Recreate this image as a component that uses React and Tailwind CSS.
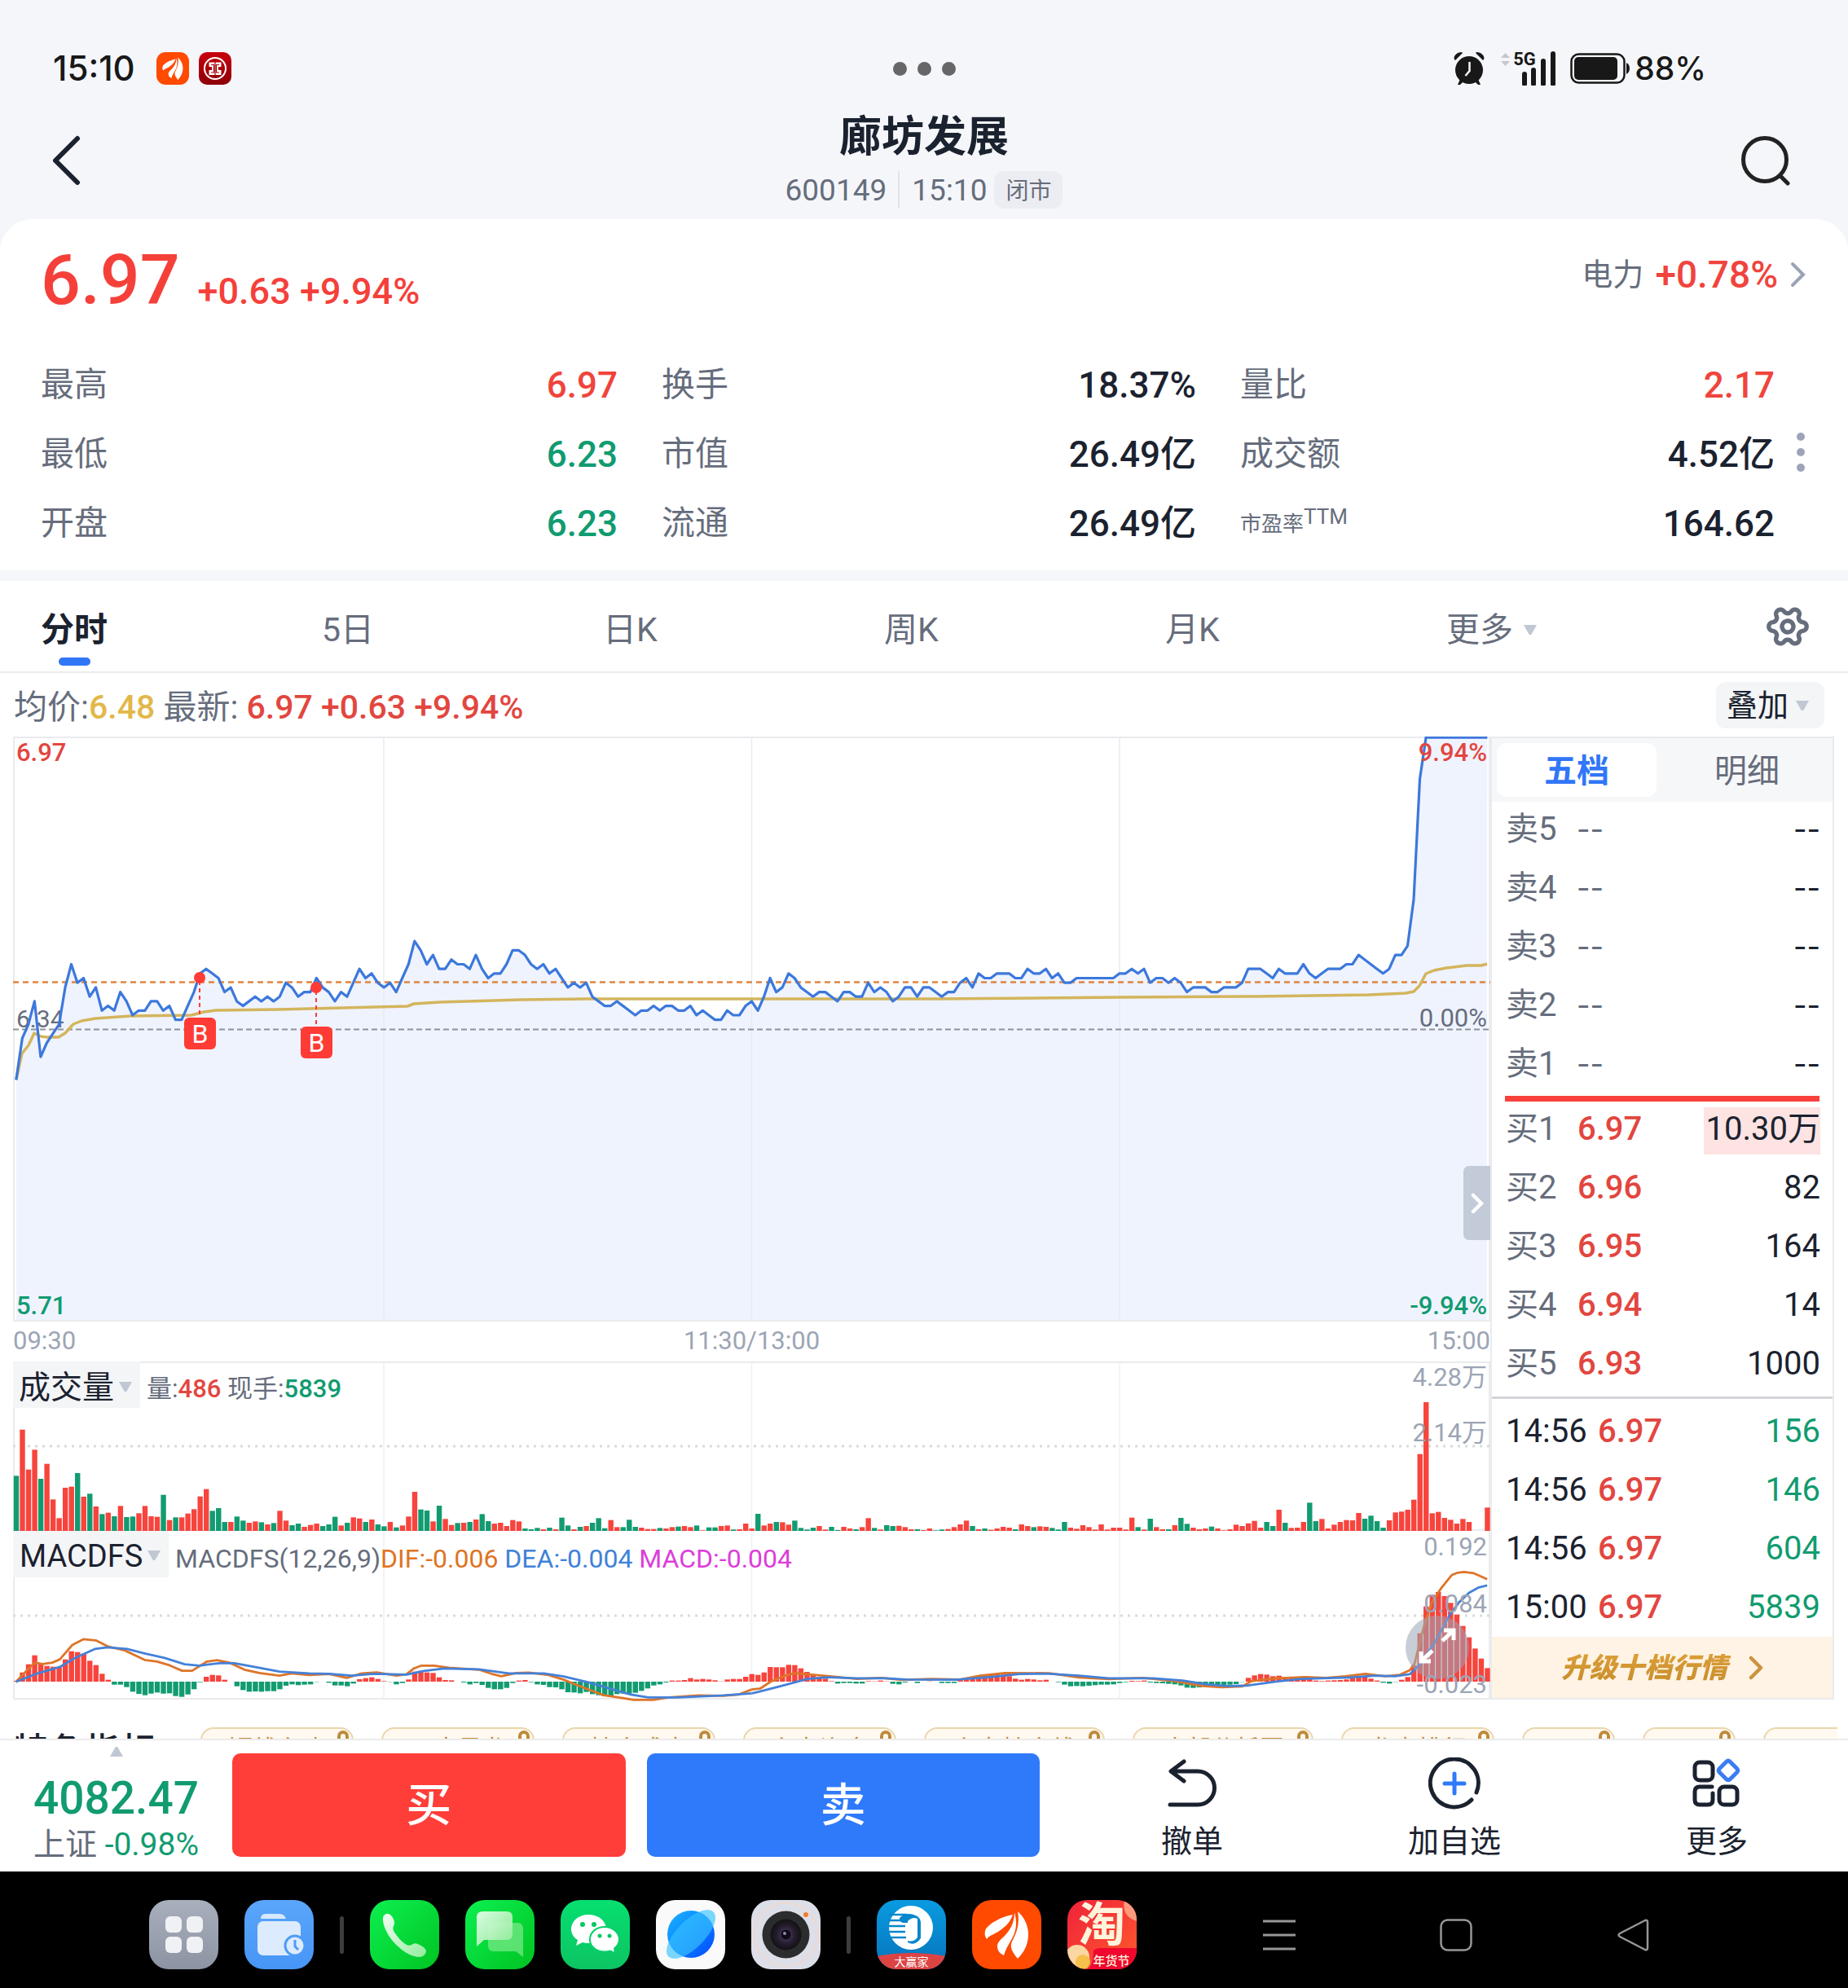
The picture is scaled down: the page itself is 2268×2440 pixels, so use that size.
import React from "react";
import { Settings } from "lucide-react";

/* ---------- data ---------- */

// Minute prices, in cents above the previous close (6.34).
const PRICE = [
  -11, -2, 1, 6, -6, -3, -1, 1, 9, 14, 10, 11, 7, 9, 4, 5, 4, 8, 6, 3, 4, 4, 6, 6, 4, 5, 2, 2, 5, 8,
  12, 13, 12, 11, 8, 9, 6, 5, 6, 7, 6, 7, 6, 7, 10, 9, 7, 8, 8, 11, 9, 8, 6, 8, 7, 10, 13, 11, 12, 10,
  9, 10, 8, 11, 14, 19, 17, 14, 16, 13, 13, 15, 14, 14, 13, 16, 13, 11, 12, 12, 14, 17, 17, 16, 14, 13, 14, 12, 13, 11,
  9, 10, 9, 10, 7, 6, 5, 5, 6, 5, 4, 3, 4, 4, 5, 4, 5, 5, 4, 4, 5, 3, 4, 3, 2, 2, 4, 3, 3, 5,
  6, 4, 7, 11, 8, 9, 12, 11, 9, 8, 7, 8, 8, 7, 6, 8, 8, 7, 7, 10, 8, 9, 8, 6, 7, 9, 9, 7, 9, 9,
  8, 7, 8, 8, 10, 11, 9, 12, 11, 11, 12, 12, 12, 11, 11, 13, 12, 12, 13, 11, 12, 10, 10, 11, 11, 11, 11, 11, 11, 11,
  12, 12, 13, 12, 13, 10, 11, 11, 10, 11, 10, 8, 9, 9, 9, 8, 8, 9, 9, 9, 10, 13, 13, 13, 12, 11, 13, 12, 12, 12,
  14, 12, 11, 12, 13, 13, 13, 14, 14, 16, 15, 14, 13, 12, 13, 16, 16, 18, 28, 54, 63, 63, 63, 63, 63, 63, 63, 63, 63, 63,
  63,
];

// Minute volumes; a negative value is a falling minute.
const VOLUME = [
  -203, 373, 226, 299, -192, 247, 116, 47, 159, 163, -213, 126, -137, 90, -62, 67, -54, 92, -51, -53, 65, 92, 54, 52, -133, 40, -50, 50, 64, 80,
  127, 154, -74, -84, -33, 33, -53, -38, 30, 35, -32, 24, -29, 74, 38, -21, -27, 15, 22, 27, -18, -24, -52, 20, -30, 50, 46, -33, 42, -24,
  -17, 33, -13, 20, 53, 144, -79, -75, 35, -93, 44, 22, -29, 30, -33, 42, -62, -36, 27, 30, 18, 40, 35, -9, -6, -11, 6, -12, 6, -49,
  -20, 6, -15, 18, -30, -47, -10, 40, 14, -14, -41, -15, 12, 7, 7, -11, 9, 14, -16, 18, 14, -20, 2, -13, -13, 18, 20, -5, 6, 27,
  9, -63, 20, 27, -33, 32, 23, -38, -11, -5, -12, 18, 5, -15, -3, 15, 9, -6, 14, 47, -11, 5, -21, -18, 19, 14, 6, -6, 3, 9,
  -2, -5, 7, 14, 24, 38, -18, 6, -9, 4, 9, 15, 12, -6, 24, 18, -14, 17, 15, -11, -5, -33, 12, 8, 21, 14, 5, 24, 5, 12,
  12, 5, 49, -14, 5, -45, 14, 6, -6, 21, -48, -26, 12, 6, 9, -16, 9, 2, 6, 23, 18, 28, 37, 12, -33, -18, 78, -30, 11, 12,
  33, -104, -36, 44, 9, 23, 33, 40, 39, 66, -45, -56, -36, -12, 39, 68, 71, 78, 115, 283, 474, 65, 70, 48, 41, 27, 44, 33, 0, 0,
  86,
];

const MACD = [
  3, 34, 64, 97, 64, 58, 55, 53, 82, 112, 109, 103, 77, 61, 29, 7, -11, -11, -20, -37, -45, -50, -44, -40, -44, -43, -53, -56, -47, -28,
  -2, 18, 25, 23, 7, 0, -17, -31, -37, -36, -37, -35, -35, -28, -15, -10, -13, -11, -10, -1, 0, -4, -14, -14, -17, -7, 9, 13, 16, 10,
  2, -1, -10, -5, 8, 37, 40, 34, 32, 16, 6, 5, 0, -3, -10, -5, -12, -23, -28, -28, -23, -5, 4, 6, -2, -10, -12, -20, -21, -28,
  -39, -40, -43, -38, -46, -50, -54, -51, -46, -44, -44, -41, -34, -25, -14, -10, -3, 4, 4, 6, 13, 8, 10, 8, 5, 1, 8, 10, 10, 18,
  28, 25, 34, 54, 53, 53, 62, 61, 49, 36, 24, 18, 11, 2, -7, -5, -5, -7, -7, 2, 1, 4, 1, -8, -10, -3, 0, -5, 0, 1,
  0, -5, -5, -5, 8, 13, 14, 20, 24, 25, 30, 26, 20, 11, 7, 10, 8, 5, 7, 0, -2, -11, -17, -16, -17, -15, -13, -11, -11, -10,
  -5, -2, 3, 2, 4, -3, -5, -6, -8, -10, -14, -22, -23, -21, -18, -16, -15, -12, -11, -9, -1, 14, 23, 28, 26, 20, 22, 16, 15, 16,
  20, 14, 4, 2, 4, 5, 6, 8, 12, 18, 20, 11, 4, -4, -7, -1, 7, 17, 60, 178, 277, 320, 330, 315, 290, 247, 205, 163, 122, 85,
  50,
];

const DIF_AM =
  "32,1333 57,1285 70,1262 85,1267 105,1262 120,1250 145,1197 167,1176 192,1180 217,1203 250,1217 290,1252 315,1258 340,1272 365,1292 385,1292 415,1258 435,1253 460,1262 490,1288 520,1300 560,1310 585,1302 620,1308 660,1304 695,1318 725,1302 755,1298 795,1310 815,1305 830,1283 845,1273 870,1273 900,1281 960,1288 985,1303 1005,1312 1035,1300 1060,1299 1100,1308 1130,1325 1160,1347 1210,1382 1240,1390 1270,1399 1310,1399 1340,1390 1400,1383 1450,1384 1480,1380 1507,1361";
const DIF_PM =
  "37,1361 55,1357 75,1333 105,1310 125,1301 150,1305 200,1313 250,1322 300,1318 340,1326 400,1322 460,1324 500,1310 550,1300 640,1301 700,1317 760,1323 830,1318 900,1332 950,1348 990,1353 1030,1350 1050,1330 1100,1320 1160,1315 1200,1318 1240,1312 1280,1303 1320,1312 1350,1307 1370,1290 1380,1265 1390,1190 1400,1120 1415,1040 1435,985 1455,940 1467,931 1480,928 1500,933 1527,955";
const DEA_AM =
  "32,1333 70,1305 120,1278 150,1245 190,1212 215,1206 255,1212 290,1228 330,1245 370,1268 400,1273 440,1264 470,1264 510,1278 560,1295 620,1302 660,1303 705,1310 750,1303 815,1306 850,1293 890,1284 960,1287 1020,1302 1090,1302 1130,1313 1180,1335 1230,1362 1265,1380 1300,1390 1360,1390 1450,1383 1507,1375";
const DEA_PM =
  "37,1375 50,1370 100,1347 150,1322 190,1316 250,1320 310,1320 350,1324 450,1325 520,1315 580,1304 640,1303 700,1310 760,1320 850,1320 910,1328 960,1342 1000,1348 1040,1347 1100,1332 1150,1322 1250,1317 1300,1310 1340,1312 1370,1305 1390,1270 1420,1190 1450,1090 1470,1040 1490,1005 1510,985 1527,978";

const AVERAGE =
  "4,421 11,389 19,379 26,364 34,368 41,369 56,369 64,364 74,353 84,349 101,346 144,343 219,342 234,338 249,336 324,335 404,333 484,331 492,328 524,326 624,323 704,322 906,322 1134,322 1359,320 1524,319 1664,317 1709,315 1719,313 1726,306 1734,291 1744,287 1759,284 1784,281 1802,281 1809,279";

const STEP = 1813 / 241;
const priceLine = PRICE.map((k, i) => `${(3.8 + i * STEP).toFixed(1)},${(359 - k * 5.68).toFixed(1)}`).join(" ");

const STATS = [
  ["最高", "6.97", "text-[#f0443c]"],
  ["换手", "18.37%", "text-[#1b222f]"],
  ["量比", "2.17", "text-[#f0443c]"],
  ["最低", "6.23", "text-[#119b70]"],
  ["市值", "26.49亿", "text-[#1b222f]"],
  ["成交额", "4.52亿", "text-[#1b222f]"],
  ["开盘", "6.23", "text-[#119b70]"],
  ["流通", "26.49亿", "text-[#1b222f]"],
  ["市盈率", "164.62", "text-[#1b222f]"],
];

const SELLS = ["卖5", "卖4", "卖3", "卖2", "卖1"];
const BUYS = [
  ["买1", "6.97", "10.30万"],
  ["买2", "6.96", "82"],
  ["买3", "6.95", "164"],
  ["买4", "6.94", "14"],
  ["买5", "6.93", "1000"],
];
const TRADES = [
  ["14:56", "6.97", "156"],
  ["14:56", "6.97", "146"],
  ["14:56", "6.97", "604"],
  ["15:00", "6.97", "5839"],
];
const CHIPS = [
  ["短线主攻", "w-[188px]"],
  ["五步寻龙", "w-[188px]"],
  ["持仓成本", "w-[188px]"],
  ["主力资金", "w-[188px]"],
  ["主力持仓线", "w-[222px]"],
  ["底部分析图", "w-[222px]"],
  ["龙虎排行", "w-[188px]"],
  ["一一", "w-[114px]"],
  ["一一", "w-[114px]"],
  ["一一", "w-[188px]"],
];

/* ---------- small pieces ---------- */

function Caret({ up, className = "" }) {
  return (
    <svg viewBox="0 0 18 13" className={`h-[13px] w-[18px] shrink-0 ${className}`} aria-hidden="true">
      <path d={up ? "M1 13h16L10.500 1.500Q9 0 7.500 1.500Z" : "M1 0h16L10.500 11.500Q9 13 7.500 11.500Z"} fill="#c1c7d3" />
    </svg>
  );
}

function EastIcon({ className }) {
  return (
    <svg viewBox="0 0 85 85" className={className} aria-hidden="true">
      <rect width="85" height="85" rx="24" fill="#ff4a00" />
      <g fill="#fff">
        <path d="M50 18C36 20 17 31 16 38c-1 4 0 7 2 10 3-5 11-6 18-12 7-5 11-10 14-18z" />
        <path d="M52 15c0 14-6 23-13 30-6 5-8 8-8 12 0 6 4 9 8 11 2-7 5-12 9-19 6-10 8-20 4-34z" />
        <path d="M56 14c3 16-2 27-6 35-4 7-3 12 6 23 9-9 13-19 13-30 0-12-6-22-13-28z" />
      </g>
    </svg>
  );
}

function IcbcIcon({ className }) {
  return (
    <svg viewBox="0 0 40 40" className={className} aria-hidden="true">
      <defs>
        <linearGradient id="icbc" x1="0" y1="0" x2="0" y2="1">
          <stop offset="0" stopColor="#c9000c" />
          <stop offset="1" stopColor="#8c0008" />
        </linearGradient>
      </defs>
      <rect width="40" height="40" rx="10" fill="url(#icbc)" />
      <circle cx="20" cy="20" r="13" fill="none" stroke="#fff" strokeWidth="2" />
      <path d="M12.500 12.500h15v5.500h-3.500v4h3.500v6h-15v-6h3.500v-4h-3.500z" fill="#fff" />
      <path d="M20 12v17M15 15.500h3.500v9.500H15M25 15.500h-3.500v9.500H25" fill="none" stroke="#a8000a" strokeWidth="1.200" />
    </svg>
  );
}

function StatusBar() {
  return (
    <div className="grid h-[114px] grid-cols-3 items-center pt-[53px] font-['Inter'] text-[#181818]">
      <div className="flex items-center pl-[65px]">
        <span className="text-[42px] leading-[62px] font-medium">15:10</span>
        <EastIcon className="ml-[26px] size-10" />
        <IcbcIcon className="ml-3 size-10" />
      </div>
      <div className="flex justify-center gap-[13px]">
        <i className="size-[17px] rounded-full bg-[#666668]" />
        <i className="size-[17px] rounded-full bg-[#666668]" />
        <i className="size-[17px] rounded-full bg-[#666668]" />
      </div>
      <div className="flex items-center justify-end pr-[174px]">
        <svg viewBox="0 0 40 42" className="h-[42px] w-10" aria-hidden="true">
          <g fill="#181818">
            <circle cx="20" cy="23" r="17" />
            <path d="M2 10C0 6 5 1 11 1l1 1L3 11zM38 10c2-4-3-9-9-9l-1 1 9 9zM9 34l-3 7h3l5-5zM31 34l3 7h-3l-5-5z" />
          </g>
          <path d="M20.500 13v11l-5 6" fill="none" stroke="#f5f6fa" strokeWidth="2.500" />
        </svg>
        <div className="relative ml-[17px] h-[42px] w-[70px]">
          <svg viewBox="0 0 70 42" className="h-[42px] w-[70px]" aria-hidden="true">
            <path d="M2 8l5.500-6L13 8zM2 12l5.500 6L13 12z" fill="#c6c7cb" />
            <path d="M31 28v12M42 23v17M54 12v28M66 3v37" stroke="#181818" strokeWidth="6" strokeLinecap="round" />
          </svg>
          <span className="absolute top-0 left-[17px] font-['Roboto'] text-[22px] leading-5 font-bold">5G</span>
        </div>
        <svg viewBox="0 0 73 38" className="ml-[17px] h-[38px] w-[73px]" aria-hidden="true">
          <rect x="1.500" y="1.500" width="65" height="35" rx="9" fill="none" stroke="#181818" strokeWidth="2.500" />
          <rect x="5" y="5" width="53" height="28" rx="5" fill="#181818" />
          <path d="M69 12q4 2 4 7t-4 7z" fill="#181818" />
        </svg>
        <span className="ml-[6px] text-[39px] leading-[62px] font-medium">88%</span>
      </div>
    </div>
  );
}

function Header() {
  return (
    <header className="grid h-[155px] grid-cols-[1fr_auto_1fr] items-start pt-[25px]">
      <button aria-label="返回" className="mt-[27px] ml-[62px] justify-self-start">
        <svg viewBox="0 0 40 62" className="h-[62px] w-10" fill="none" stroke="#1b222f" strokeWidth="6" strokeLinecap="round" strokeLinejoin="round">
          <path d="M33 4L6 31l27 27" />
        </svg>
      </button>
      <div className="flex flex-col items-center">
        <h1 className="text-[52px] leading-[60px] font-bold text-[#1b222f]">廊坊发展</h1>
        <div className="mt-[11px] flex h-[46px] items-center text-[37px] leading-[49px] text-[#666d7c]">
          <span>600149</span>
          <span className="mr-[15px] ml-[14px] h-full w-[2px] bg-[#e1e3e9]" />
          <span>15:10</span>
          <span className="ml-[9px] h-full rounded-[12px] bg-[#ecedf2] px-[14px] text-[28px]">闭市</span>
        </div>
      </div>
      <button aria-label="搜索" className="mt-[27px] mr-[70px] justify-self-end">
        <svg viewBox="0 0 62 62" className="size-[62px]" fill="none" stroke="#222" strokeWidth="5" strokeLinecap="round">
          <circle cx="30" cy="30" r="26.500" />
          <path d="M50 51l8 8" />
        </svg>
      </button>
    </header>
  );
}

function Quote() {
  return (
    <section className="rounded-t-[40px] bg-white pb-[15px]">
      <div className="flex h-[161px] items-start justify-between pt-[32px] pr-[50px] pl-[50px]">
        <div className="flex items-baseline text-[#f5403a]">
          <span className="text-[86px] leading-[86px] font-medium">6.97</span>
          <span className="ml-[22px] text-[45px] font-medium">+0.63 +9.94%</span>
        </div>
        <a href="#power" className="flex h-[72px] items-center">
          <span className="text-[38px] text-[#666d7c]">电力</span>
          <span className="ml-[14px] text-[46px] font-medium text-[#f0443c]">+0.78%</span>
          <svg viewBox="0 0 22 32" className="ml-[14px] h-8 w-[22px]" fill="none" stroke="#9aa3b5" strokeWidth="4" strokeLinecap="round">
            <path d="M4 3l13 13L4 29" />
          </svg>
        </a>
      </div>
      <div className="flex items-center pr-[50px] pl-[50px]">
        <dl className="grid flex-1 grid-cols-[708fr_656fr_656fr] gap-x-[54px]">
          {STATS.map(([label, value, color]) => (
            <div key={label} className="flex h-[85px] items-center justify-between">
              {label === "市盈率" ? (
                <dt className="flex text-[26px] leading-[30px] text-[#666d7c]">
                  <span>市盈率</span>
                  <span className="-mt-[9px]">TTM</span>
                </dt>
              ) : (
                <dt className="text-[41px] text-[#666d7c]">{label}</dt>
              )}
              <dd className={`text-[44px] font-medium ${color}`}>{value}</dd>
            </div>
          ))}
        </dl>
        <button aria-label="展开" className="-mt-[6px] ml-[27px] flex w-[13px] flex-col gap-[9px]">
          <i className="size-[10px] rounded-full bg-[#9ca5b8]" />
          <i className="size-[10px] rounded-full bg-[#9ca5b8]" />
          <i className="size-[10px] rounded-full bg-[#9ca5b8]" />
        </button>
      </div>
    </section>
  );
}

function Tabs() {
  return (
    <nav className="flex h-[113px] items-center border-b-2 border-[#ebebeb] pl-[50px] text-[41px] text-[#666d7c]">
      {["分时", "5日", "日K", "周K", "月K", "更多"].map((t, i) => (
        <div key={t} className="relative flex h-full flex-1 items-center pt-[10px]">
          <button className={i === 0 ? "font-bold text-[#1b222f]" : "flex items-center"}>
            {t}
            {i === 5 && <Caret className="ml-3" />}
          </button>
          {i === 0 && <span className="absolute bottom-[7px] left-[22px] h-[10px] w-[39px] rounded-full bg-[#3176f6]" />}
        </div>
      ))}
      <button aria-label="设置" className="flex w-[148px] justify-center">
        <Settings size={56} strokeWidth={2.3} color="#666d7c" className="rotate-30" />
      </button>
    </nav>
  );
}

function InfoRow() {
  return (
    <div className="flex h-[78px] items-center justify-between pr-[29px] pl-[17px] text-[41px]">
      <p className="pt-[8px] whitespace-pre text-[#666d7c]">
        均价:<span className="font-medium text-[#e2b84a]">6.48</span> 最新: <span className="font-medium text-[#e2463f]">6.97 +0.63 +9.94%</span>
      </p>
      <button className="flex h-[57px] items-center rounded-[12px] bg-[#f4f5f7] pt-[2px] pr-[18px] pl-[13px] text-[38px] text-[#1b222f]">
        叠加
        <Caret className="ml-[8px]" />
      </button>
    </div>
  );
}

function PriceChart() {
  return (
    <div className="relative h-[718px] text-[31px] leading-[36px]">
      <svg viewBox="0 0 1813 718" preserveAspectRatio="none" className="block h-full w-full" aria-label="分时走势">
        <polygon points={`3.800,717 ${priceLine} 1808.600,717`} fill="#eff3fe" />
        <path d="M455 0v718M906.500 0v718M1358 0v718" stroke="#e9ebf1" strokeWidth="1.500" />
        <rect x="1" y="1" width="1811" height="716" fill="none" stroke="#e9ebee" strokeWidth="2" />
        <path d="M0 359.500H1813" stroke="#8d919b" strokeWidth="2" strokeDasharray="7 4" />
        <path d="M0 301.500H1813" stroke="#e0853f" strokeWidth="2.500" strokeDasharray="7 5" />
        <text x="4" y="357" className="fill-[#666d7c] font-['Roboto'] text-[30px]">6.34</text>
        <polyline points={AVERAGE} fill="none" stroke="#d3b55c" strokeWidth="3.500" strokeLinejoin="round" />
        <polyline points={priceLine} fill="none" stroke="#3c78dc" strokeWidth="3.200" strokeLinejoin="round" />
        <path d="M229 300v48M372 312v48" stroke="#ff3b36" strokeWidth="2" strokeDasharray="5 4" />
        <circle cx="229" cy="296" r="7" fill="#ff3b36" />
        <circle cx="372" cy="308" r="7" fill="#ff3b36" />
        <rect x="210" y="345" width="39" height="39" rx="6" fill="#ff3b36" />
        <rect x="353" y="356" width="39" height="39" rx="6" fill="#ff3b36" />
        <g className="fill-white font-['Roboto'] text-[32px]" textAnchor="middle">
          <text x="229.500" y="376">B</text>
          <text x="372.500" y="387">B</text>
        </g>
      </svg>
      <span className="absolute top-[2px] left-[4px] font-medium text-[#e2463f]">6.97</span>
      <span className="absolute top-[2px] right-[4px] font-medium text-[#e2463f]">9.94%</span>
      <span className="absolute top-[328px] right-[4px] text-[#666d7c]">0.00%</span>
      <span className="absolute bottom-[1px] left-[4px] font-medium text-[#119b70]">5.71</span>
      <span className="absolute right-[4px] bottom-[1px] font-medium text-[#119b70]">-9.94%</span>
      <button aria-label="收起盘口" className="absolute top-[527px] right-0 flex h-[91px] w-[33px] items-center justify-center rounded-l-[7px] bg-[#c3cad8]">
        <svg viewBox="0 0 18 26" className="h-[26px] w-[18px]" fill="none" stroke="#fff" strokeWidth="4.500" strokeLinecap="round">
          <path d="M4 3l10 10L4 23" />
        </svg>
      </button>
    </div>
  );
}

function VolumeChart() {
  return (
    <div className="relative h-[208px] text-[31px] leading-[36px]">
      <svg viewBox="0 0 1813 208" preserveAspectRatio="none" className="block h-full w-full" aria-label="成交量">
        <path d="M455 0v208M906.500 0v208M1358 0v208" stroke="#f0f1f3" strokeWidth="1.500" />
        <path d="M0 1H1812V208M1 0V208M0 207H1813" fill="none" stroke="#e9ebee" strokeWidth="2" />
        <path d="M0 104H1813" stroke="#d9dbdf" strokeWidth="3" strokeDasharray="3 6" />
        {VOLUME.map((v, i) => (
          <rect key={i} x={0.8 + i * STEP} y={208 - Math.abs(v) / 3} width="6.400" height={Math.abs(v) / 3} fill={v < 0 ? "#129b71" : "#f7443d"} />
        ))}
      </svg>
      <div className="absolute top-0 left-0 flex items-center">
        <button className="flex h-[57px] w-[156px] items-center bg-[#f4f5f7] pt-[6px] pl-[7px] text-[39px] text-[#1b222f]">
          成交量
          <Caret className="ml-[5px]" />
        </button>
        <p className="pt-[10px] pl-[8px] text-[#666d7c]">
          量:<span className="font-medium text-[#e2463f]">486</span> 现手:<span className="font-medium text-[#119b70]">5839</span>
        </p>
      </div>
      <span className="absolute top-[2px] right-[4px] text-[#9ca5b5]">4.28万</span>
      <span className="absolute top-[70px] right-[4px] text-[#9ca5b5]">2.14万</span>
    </div>
  );
}

function MacdChart() {
  return (
    <div className="relative h-[207px] text-[31px] leading-[36px]">
      <svg viewBox="0 0 1813 207" preserveAspectRatio="none" className="block h-full w-full overflow-visible" aria-label="MACDFS">
        <path d="M455 0v207M906.500 0v207M1358 0v207" stroke="#f0f1f3" strokeWidth="1.500" />
        <path d="M1812 0V206H1V0" fill="none" stroke="#e9ebee" strokeWidth="2" />
        <path d="M0 104H1813" stroke="#d9dbdf" strokeWidth="3" strokeDasharray="3 6" />
        {MACD.map((v, i) => (
          <rect key={i} x={0.8 + i * STEP} y={v < 0 ? 185 : 185 - v / 3} width="6.400" height={Math.abs(v) / 3} fill={v < 0 ? "#129b71" : "#f7443d"} />
        ))}
        <g fill="none" strokeWidth="2.800" strokeLinejoin="round">
          <g transform="matrix(0.6122 0 0 0.3333 -16 -259)">
            <polyline points={DIF_AM} stroke="#dd7529" vectorEffect="non-scaling-stroke" />
            <polyline points={DEA_AM} stroke="#4481d8" vectorEffect="non-scaling-stroke" />
          </g>
          <g transform="matrix(0.6059 0 0 0.3333 884 -259)">
            <polyline points={DIF_PM} stroke="#dd7529" vectorEffect="non-scaling-stroke" />
            <polyline points={DEA_PM} stroke="#4481d8" vectorEffect="non-scaling-stroke" />
          </g>
        </g>
      </svg>
      <div className="absolute top-0 left-0 flex items-center">
        <button className="flex h-[57px] w-[191px] items-center bg-[#f4f5f7] pt-[4px] pl-[8px] text-[38px] text-[#1b222f]">
          MACDFS
          <Caret className="ml-[5px]" />
        </button>
        <p className="pt-[10px] pl-[8px] text-[32px] whitespace-pre text-[#666d7c]">
          MACDFS(12,26,9)<span className="text-[#e0731f]">DIF:-0.006</span> <span className="text-[#3f82d9]">DEA:-0.004</span>{" "}
          <span className="text-[#dc3ed9]">MACD:-0.004</span>
        </p>
      </div>
      <button aria-label="全屏" className="absolute top-[104px] right-[26px] size-[78px] rounded-full bg-[#9aa5b8]/55">
        <svg viewBox="0 0 78 78" className="size-[78px]" fill="none" stroke="#fff" strokeWidth="5">
          <path d="M45 31l14-13M47 18h12v12M33 43L19 56M19 44v12h12" />
        </svg>
      </button>
      <span className="absolute top-[2px] right-[4px] text-[#9ca5b5]">0.192</span>
      <span className="absolute top-[72px] right-[4px] text-[#9ca5b5]">0.084</span>
      <span className="absolute top-[171px] right-[4px] text-[#9ca5b5]">-0.023</span>
    </div>
  );
}

function OrderBook() {
  return (
    <aside className="flex w-[422px] flex-col border-2 border-[#e9ebee] text-[40px] text-[#1b222f]">
      <div className="flex h-[78px] bg-[#f6f7f9] py-[6px] pl-[6px] leading-[69px]">
        <button className="w-[196px] rounded-[12px] bg-white font-bold text-[#3176f6]">五档</button>
        <button className="flex-1 pl-[6px] text-[#666d7c]">明细</button>
      </div>
      <table className="w-full leading-[68px]">
        <tbody>
          {SELLS.map((s) => (
            <tr key={s} className="h-[72px] align-top text-[#666d7c]">
              <td className="w-[104px] pl-[17px]">{s}</td>
              <td className="font-['Inter'] text-[36px]">--</td>
              <td className="pr-[15px] text-right font-['Inter'] text-[36px] text-[#1b222f]">--</td>
            </tr>
          ))}
        </tbody>
      </table>
      <div className="mx-[16px] mt-px h-[7px] bg-[#f9413b]" />
      <table className="w-full leading-[68px]">
        <tbody>
          {BUYS.map(([name, price, size], i) => (
            <tr key={name} className="h-[72px] align-top">
              <td className="w-[105px] pl-[17px] text-[#666d7c]">{name}</td>
              <td className="font-medium text-[#e2463f]">{price}</td>
              <td className="pr-[15px] text-right">
                {i === 0 ? <span className="mt-[7px] ml-auto block h-[58px] w-[143px] bg-[#fde3e2] leading-[54px]">{size}</span> : size}
              </td>
            </tr>
          ))}
        </tbody>
      </table>
      <div className="mt-[2px] h-[3px] bg-[#d3d5d9]" />
      <table className="mt-[4px] w-full">
        <tbody>
          {TRADES.map(([time, price, size], i) => (
            <tr key={i} className="h-[72px]">
              <td className="w-[130px] pl-[17px]">{time}</td>
              <td className="font-medium text-[#e2463f]">{price}</td>
              <td className="pr-[15px] text-right text-[#119b70]">{size}</td>
            </tr>
          ))}
        </tbody>
      </table>
      <button className="flex flex-1 items-center justify-center bg-[#fef3e4]">
        <span className="bg-linear-to-b from-[#e0a23a] to-[#c48a2a] bg-clip-text pr-1 text-[34px] leading-[50px] font-black text-transparent italic">升级十档行情</span>
        <svg viewBox="0 0 18 30" className="ml-[22px] h-[30px] w-[18px]" fill="none" stroke="#c9943e" strokeWidth="4.500" strokeLinecap="round" strokeLinejoin="round">
          <path d="M3 3l12 12L3 27" />
        </svg>
      </button>
    </aside>
  );
}

function IndicatorChips() {
  return (
    <div className="mr-[13px] flex h-[48px] items-start gap-[34px] overflow-hidden pt-[34px] pl-[16px]">
      <span className="w-[196px] shrink-0 text-[44px] leading-[60px] font-medium whitespace-nowrap text-[#1b222f]">特色指标</span>
      {CHIPS.map(([name, width], i) => (
        <button key={i} className={`relative h-[54px] shrink-0 rounded-[16px] border-2 border-[#ead6ae] bg-[#fff9ef] text-[30px] leading-[50px] whitespace-nowrap text-[#be8b3c] ${width}`}>
          {name}
          <svg viewBox="0 0 20 24" className="absolute top-[1px] right-[1px] h-6 w-5" aria-hidden="true">
            <path d="M5 12V8a5 5 0 0 1 10 0v4" fill="none" stroke="#be8b3c" strokeWidth="4" />
            <rect x="2" y="11" width="16" height="12" rx="2" fill="#be8b3c" />
          </svg>
        </button>
      ))}
    </div>
  );
}

function ActionBar() {
  const props = { viewBox: "0 0 64 64", className: "h-[64px] w-[64px]", fill: "none", stroke: "#1b222f", strokeWidth: 5, strokeLinecap: "round", strokeLinejoin: "round" };
  return (
    <div className="flex h-[163px] border-t-2 border-[#ebebeb] bg-white">
      <a href="#index" className="flex w-[285px] flex-col items-center pt-[7px]">
        <Caret up />
        <span className="mt-[21px] text-[55px] leading-[60px] font-medium text-[#119b70]">4082.47</span>
        <span className="mt-[5px] text-[39px] leading-[44px] whitespace-pre text-[#119b70]">
          <span className="text-[#666d7c]">上证</span> -0.98%
        </span>
      </a>
      <div className="flex w-[991px] gap-[26px] pt-[16px] pb-[18px] text-[56px] font-medium text-white">
        <button className="flex-1 rounded-[10px] bg-[#ff3e39]">买</button>
        <button className="flex-1 rounded-[10px] bg-[#2f7afa]">卖</button>
      </div>
      <div className="ml-[26px] flex flex-1 text-[38px] leading-[44px] text-[#1b222f]">
        <button className="flex flex-1 flex-col items-center pt-[21px]">
          <svg {...props}>
            <path d="M22 5L6 17l16 12M7 17h32a20.500 20.500 0 0 1 0 41H5" />
          </svg>
          <span className="mt-[17px]">撤单</span>
        </button>
        <button className="flex flex-1 flex-col items-center pt-[21px]">
          <svg {...props}>
            <path d="M59 43A29.500 29.500 0 1 0 53 52" />
            <path d="M32 20v24M20 32h24" stroke="#2f7afa" />
          </svg>
          <span className="mt-[17px]">加自选</span>
        </button>
        <button className="flex flex-1 flex-col items-center pt-[21px]">
          <svg {...props}>
            <rect x="5" y="6" width="22" height="22" rx="6" />
            <rect x="35" y="36" width="22" height="22" rx="6" />
            <path d="M26 36H11q-6 0-6 6v10q0 6 6 6h10q6 0 6-6V44" />
            <path d="M43.500 5.500q2.500-2.500 5 0l8 8q2.500 2.500 0 5l-8 8q-2.500 2.500-5 0l-8-8q-2.500-2.500 0-5z" stroke="#3c7df5" />
          </svg>
          <span className="mt-[17px]">更多</span>
        </button>
      </div>
    </div>
  );
}

function DockIcon({ label, children }) {
  return (
    <button aria-label={label} className="relative size-[85px] shrink-0 overflow-hidden rounded-[24px]">
      <svg viewBox="0 0 85 85" className="size-[85px]" aria-hidden="true">
        {children}
      </svg>
    </button>
  );
}

function Dock() {
  return (
    <footer className="flex h-[143px] items-center justify-between bg-black pt-[12px] pr-[156px] pl-[183px]">
      <svg className="absolute size-0" aria-hidden="true">
        <defs>
          <linearGradient id="gGrey" x1="0" y1="0" x2="0" y2="1"><stop offset="0" stopColor="#a9afbc" /><stop offset="1" stopColor="#8c93a2" /></linearGradient>
          <linearGradient id="gBlue" x1="0" y1="0" x2="0" y2="1"><stop offset="0" stopColor="#5aa6fb" /><stop offset="1" stopColor="#4795f6" /></linearGradient>
          <linearGradient id="gGreen" x1="0" y1="0" x2="1" y2="1"><stop offset="0" stopColor="#0cf050" /><stop offset="1" stopColor="#00c322" /></linearGradient>
          <linearGradient id="gWechat" x1="0" y1="0" x2="0" y2="1"><stop offset="0" stopColor="#06df70" /><stop offset="1" stopColor="#0cc463" /></linearGradient>
          <linearGradient id="gGlobe" x1="0" y1="0" x2="1" y2="1"><stop offset="0" stopColor="#19b8ff" /><stop offset="1" stopColor="#0048ff" /></linearGradient>
          <linearGradient id="gCmb" x1="0" y1="0" x2="0" y2="1"><stop offset="0" stopColor="#0a9be0" /><stop offset="1" stopColor="#0574bd" /></linearGradient>
          <linearGradient id="gTao" x1="0" y1="0" x2="1" y2="1"><stop offset="0" stopColor="#f0223a" /><stop offset="1" stopColor="#ff5a2c" /></linearGradient>
          <linearGradient id="gHandset" x1="0" y1="0" x2="1" y2="1"><stop offset="0" stopColor="#f2fff4" /><stop offset="1" stopColor="#93ec9d" /></linearGradient>
          <linearGradient id="gBubble" x1="0" y1="0" x2="1" y2="1"><stop offset="0" stopColor="#f4fff5" /><stop offset="1" stopColor="#8fea98" /></linearGradient>
          <radialGradient id="gLens"><stop offset="0" stopColor="#57406e" /><stop offset="0.600" stopColor="#241d2d" /><stop offset="1" stopColor="#121214" /></radialGradient>
        </defs>
      </svg>
      <div className="flex items-center gap-8">
        <DockIcon label="应用">
          <rect width="85" height="85" fill="url(#gGrey)" />
          <g fill="#f0f1f4">
            <rect x="20" y="20" width="20" height="20" rx="6" />
            <rect x="46" y="20" width="20" height="20" rx="6" />
            <rect x="20" y="45" width="20" height="20" rx="6" />
            <rect x="46" y="45" width="20" height="20" rx="6" />
          </g>
        </DockIcon>
        <DockIcon label="文件">
          <rect width="85" height="85" fill="url(#gBlue)" />
          <path d="M20 23q0-6 6-6h17q6 0 8 6z" fill="#d6e8fd" />
          <rect x="16" y="26" width="53" height="42" rx="7" fill="#dcebfd" />
          <circle cx="62" cy="56" r="12" fill="#dcebfd" stroke="#4d9bf8" strokeWidth="3" />
          <path d="M62 49v8l4 4" fill="none" stroke="#4d9bf8" strokeWidth="3" />
        </DockIcon>
        <i className="h-[46px] w-[5px] rounded-full bg-[#3d3d3f]" />
        <DockIcon label="电话">
          <rect width="85" height="85" fill="url(#gGreen)" />
          <path d="M17 19q5-5 10 1 5 7 2 12-2 4 2 9 7 10 14 14 4 2 8-1 3-2 8 1 8 4 8 8-1 6-8 7-10 0-22-9-14-11-20-25-5-12-2-17z" fill="url(#gHandset)" />
        </DockIcon>
        <DockIcon label="信息">
          <rect width="85" height="85" fill="url(#gGreen)" />
          <path d="M35 28h29q7 0 7 8v34l-9-7H35q-7 0-7-7V35q0-7 7-7z" fill="#7fe98c" opacity="0.700" />
          <path d="M22 14h29q7 0 7 7v21q0 7-7 7H23l-9 8V21q0-7 8-7z" fill="url(#gBubble)" opacity="0.900" />
        </DockIcon>
        <DockIcon label="微信">
          <rect width="85" height="85" fill="url(#gWechat)" />
          <path d="M34 18c13 0 22 8 22 18S47 53 34 53q-4 0-7-1l-8 4 2-7c-5-3-8-8-8-13 0-10 9-18 21-18z" fill="#fff" />
          <circle cx="27" cy="30" r="3" fill="#07c765" />
          <circle cx="41" cy="30" r="3" fill="#07c765" />
          <path d="M54 33c10 0 18 7 18 15.500 0 4.500-3 8.500-6 11l1 6-6-3q-3 1-7 1c-10 0-18-6-18-15s8-15.500 18-15.500z" fill="#fff" stroke="#08cf69" strokeWidth="2" />
          <circle cx="48" cy="44" r="2.500" fill="#07c765" />
          <circle cx="60" cy="44" r="2.500" fill="#07c765" />
        </DockIcon>
        <DockIcon label="浏览器">
          <rect width="85" height="85" fill="#fafafa" />
          <circle cx="43" cy="42" r="29" fill="url(#gGlobe)" />
          <ellipse cx="43" cy="42" rx="39" ry="17" transform="rotate(-45 43 42)" fill="#37c3ff" opacity="0.650" />
        </DockIcon>
        <DockIcon label="相机">
          <rect width="85" height="85" fill="#dddfe8" />
          <circle cx="42.500" cy="42.500" r="39" fill="none" stroke="#f0d6cd" strokeWidth="1.500" />
          <circle cx="42.500" cy="42.500" r="29" fill="#2b2c2e" />
          <circle cx="42.500" cy="42.500" r="19" fill="url(#gLens)" />
          <circle cx="42.500" cy="42.500" r="6" fill="#0d0b14" />
          <circle cx="41" cy="41" r="2" fill="#8f86b0" />
          <circle cx="67" cy="18" r="3" fill="#ef7d2b" />
        </DockIcon>
        <i className="h-[46px] w-[5px] rounded-full bg-[#3d3d3f]" />
        <DockIcon label="大赢家">
          <rect width="85" height="85" fill="url(#gCmb)" />
          <circle cx="42" cy="34" r="27" fill="#fff" />
          <path d="M15 18h22M13 25h22M13 32h22M13 39h22M14 46h22" stroke="#0887cd" strokeWidth="2.500" />
          <path d="M28 22q8-8 20-3 5 2 6 8v20q-7 10-16 5V28h-6q-5-2-4-6z" fill="#0887cd" />
          <path d="M38 26q6-6 12-3v23q-5 6-12 4z" fill="#fff" />
          <path d="M0 69q42-8 85 0v16H0z" fill="#dc4444" />
          <text x="42.500" y="81" textAnchor="middle" className="fill-white font-['Noto_Sans_CJK_SC'] text-[14px]">大赢家</text>
        </DockIcon>
        <button aria-label="东方财富" className="shrink-0">
          <EastIcon className="size-[85px]" />
        </button>
        <DockIcon label="淘宝">
          <rect width="85" height="85" fill="url(#gTao)" />
          <path d="M70 0h15v26Q66 20 70 0z" fill="#ff9a7c" />
          <circle cx="12" cy="70" r="15" fill="#fbd7a4" />
          <circle cx="19" cy="76" r="9" fill="#f6c04c" />
          <path d="M32 62q3-3 8-3h45v26H24q8-4 8-23z" fill="#f0062e" />
          <text x="42" y="51" textAnchor="middle" className="fill-[#fff3dc] font-['Noto_Sans_CJK_SC'] text-[58px] font-bold">淘</text>
          <text x="54" y="80" textAnchor="middle" className="fill-[#fff3dc] font-['Noto_Sans_CJK_SC'] text-[15px] font-medium">年货节</text>
        </DockIcon>
      </div>
      <div className="flex">
        <button aria-label="菜单" className="flex w-[217px] justify-center">
          <svg viewBox="0 0 40 40" className="size-10" stroke="#97979a" strokeWidth="3"><path d="M0 3h40M0 20h40M0 37h40" /></svg>
        </button>
        <button aria-label="主屏幕" className="flex w-[217px] justify-center">
          <svg viewBox="0 0 40 40" className="size-10" fill="none" stroke="#97979a" strokeWidth="2.500"><rect x="1.500" y="1.500" width="37" height="37" rx="8" /></svg>
        </button>
        <button aria-label="后退" className="flex w-[217px] justify-center">
          <svg viewBox="0 0 40 40" className="size-10" fill="none" stroke="#97979a" strokeWidth="2.500" strokeLinejoin="round"><path d="M38 4v32q0 3-3 2L4 22q-3-2 0-4L35 2q3-1 3 2z" /></svg>
        </button>
      </div>
    </footer>
  );
}

export default function App() {
  return (
    <div className="flex min-h-screen flex-col bg-white font-['Roboto','Noto_Sans_CJK_SC',sans-serif]">
      <div className="bg-[#f5f6fa]">
        <StatusBar />
        <Header />
        <Quote />
        <div className="h-[13px]" />
      </div>
      <Tabs />
      <InfoRow />
      <main className="flex pr-[17px] pl-[16px]">
        <div className="min-w-0 flex-1">
          <PriceChart />
          <div className="grid h-[49px] grid-cols-3 items-center text-[31px] text-[#9ca5b5]">
            <span>09:30</span>
            <span className="text-center">11:30/13:00</span>
            <span className="text-right">15:00</span>
          </div>
          <VolumeChart />
          <MacdChart />
        </div>
        <OrderBook />
      </main>
      <IndicatorChips />
      <ActionBar />
      <Dock />
    </div>
  );
}
